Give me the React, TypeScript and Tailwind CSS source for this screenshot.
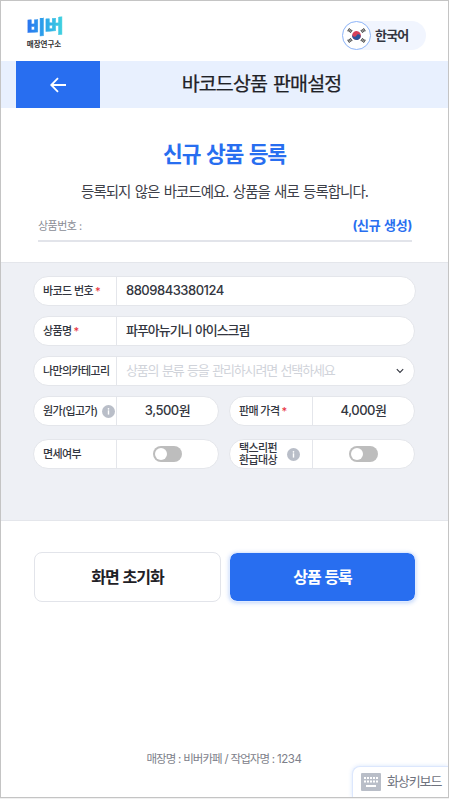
import React from "react";

const Star = () => <span className="ml-[2px] text-[#e8323c]">*</span>;

const Info = ({ className = "" }: { className?: string }) => (
  <svg className={`h-[13px] w-[13px] shrink-0 ${className}`} viewBox="0 0 13 13">
    <circle cx="6.5" cy="6.5" r="6.5" fill="#b9bec8" />
    <circle cx="6.5" cy="3.8" r="0.85" fill="#fff" />
    <rect x="5.8" y="5.3" width="1.4" height="4.3" fill="#fff" />
  </svg>
);

const Toggle = () => (
  <button className="flex h-4 w-[29px] items-center rounded-full bg-[#bdbdbd] px-[2px]" aria-pressed="false">
    <span className="h-3 w-3 rounded-full bg-white" />
  </button>
);

function Field({
  label,
  children,
  className = "",
}: {
  label: React.ReactNode;
  children: React.ReactNode;
  className?: string;
}) {
  return (
    <div className={`flex h-[30px] overflow-hidden rounded-full border border-[#e4e6eb] bg-white ${className}`}>
      <div className="flex w-[83px] shrink-0 items-center border-r border-[#e4e6eb] pl-[9px] text-[11px] leading-[12px] font-medium tracking-[-0.6px] whitespace-nowrap text-[#333640]">
        {label}
      </div>
      <div className="flex min-w-0 flex-1 items-center text-[13px] font-medium tracking-[-0.5px] whitespace-nowrap text-[#333640]">
        {children}
      </div>
    </div>
  );
}

function Flag() {
  return (
    <svg className="h-[29px] w-[29px]" viewBox="0 0 29 29">
      <circle cx="14.5" cy="14.5" r="14" fill="#fff" stroke="#8fb5f8" />
      <g transform="rotate(25 14.5 14.5)">
        <circle cx="14.5" cy="14.5" r="4.4" fill="#d6405a" />
        <path d="M10.1 14.5a2.2 2.2 0 0 0 4.4 0a2.2 2.2 0 0 1 4.4 0a4.4 4.4 0 0 1-8.8 0z" fill="#2a559c" />
      </g>
      <g stroke="#444" strokeWidth="1.1">
        <path d="M5.6 10.2l2-2.8M6.9 11l2-2.8M8.2 11.8l2-2.8" />
        <path d="M23.4 10.2l-2-2.8M22.1 11l-2-2.8M20.8 11.8l-2-2.8" />
        <path d="M5.6 18.8l2 2.8M6.9 18l2 2.8M8.2 17.2l2 2.8" />
        <path d="M23.4 18.8l-2 2.8M22.1 18l-2 2.8M20.8 17.2l-2 2.8" />
      </g>
    </svg>
  );
}

export default function App() {
  return (
    <div className="h-[799px] w-[449px] bg-[#f0f0f0] font-['Inter','Noto_Sans_CJK_KR',sans-serif]">
      <div className="relative flex h-[798px] flex-col overflow-hidden border border-[#c4c4c4] bg-white">
        <header className="flex h-[60px] shrink-0 items-start justify-between pr-[22px] pl-[25px]">
          <div className="flex w-[36px] flex-col items-center pt-[16px]">
            <div className="h-[21px] origin-center -skew-y-4 scale-x-105 scale-y-[0.96] bg-linear-to-r from-[#2b70f0] to-[#41d3df] bg-clip-text text-[20px] leading-[21px] font-black tracking-[-1px] whitespace-nowrap text-transparent [-webkit-text-stroke:0.5px_transparent]">
              비버
            </div>
            <div className="mt-[2px] text-[7.5px] leading-[10px] font-bold whitespace-nowrap text-[#333]">
              매장연구소
            </div>
          </div>
          <button className="mt-5 flex h-[29px] w-[84px] items-center rounded-full bg-[#f1f5fe]">
            <Flag />
            <span className="ml-1 text-[13px] font-bold tracking-[-0.8px] text-[#333640]">한국어</span>
          </button>
        </header>

        <div className="flex h-[47px] shrink-0 bg-[#e8f0fe] pl-[15px]">
          <button className="flex w-[84px] items-center justify-center bg-[#286ef0]" aria-label="뒤로">
            <svg className="h-4 w-4" viewBox="0 0 16 16" fill="none" stroke="#fff" strokeWidth="1.8">
              <path d="M16 8H1.2M8 1.2L1.2 8L8 14.8" />
            </svg>
          </button>
          <h1 className="flex flex-1 items-center justify-center pt-px pr-[25px] text-[19.5px] font-normal tracking-[-0.9px] text-[#1f2126] [word-spacing:1.5px] [-webkit-text-stroke:0.25px_#1f2126]">
            바코드상품 판매설정
          </h1>
        </div>

        <section className="flex h-[154px] shrink-0 flex-col px-[37px] pt-[30px]">
          <h2 className="text-center text-[21.5px] leading-8 font-bold tracking-[-1.2px] text-[#286ef0] [word-spacing:1.8px]">
            신규 상품 등록
          </h2>
          <p className="mt-[12px] text-center text-[14.5px] leading-5 tracking-[-1px] whitespace-nowrap text-[#3d4049] [word-spacing:1.2px]">
            등록되지 않은 바코드예요. 상품을 새로 등록합니다.
          </p>
          <div className="mt-[13px] mr-[-1px] flex h-[27px] items-start justify-between border-b-2 border-[#e2e4ea] leading-5">
            <span className="text-[11px] leading-[22px] tracking-[-0.5px] text-[#8a8d96]">상품번호 :</span>
            <span className="text-[13px] font-bold tracking-[-0.3px] text-[#286ef0] [word-spacing:1px]">(신규 생성)</span>
          </div>
        </section>

        <section className="h-[259px] shrink-0 border-y border-[#e4e6eb] bg-[#eef0f5] px-8 pt-[13px]">
          <div className="flex w-[383px] flex-col gap-[10px]">
            <Field label={<>바코드 번호<Star /></>}>
              <span className="pl-[9px]">8809843380124</span>
            </Field>
            <Field className="mr-[1px]" label={<>상품명<Star /></>}>
              <span className="pl-[9px] tracking-[-1.05px] [word-spacing:1px]">파푸아뉴기니 아이스크림</span>
            </Field>
            <Field className="mr-[1px]" label="나만의카테고리">
              <span className="flex-1 pl-[9px] font-normal tracking-[-1.15px] text-[#d0d3da] [word-spacing:1px]">
                상품의 분류 등을 관리하시려면 선택하세요
              </span>
              <svg className="mr-[10px] h-2 w-2" viewBox="0 0 8 8" fill="none" stroke="#333640" strokeWidth="1.1">
                <path d="M0.8 2.2L4 5.4L7.2 2.2" />
              </svg>
            </Field>
            <div className="mr-[1px] grid grid-cols-2 gap-x-[10px] gap-y-[13px]">
              <Field label={<>원가(입고가)<Info className="ml-[4px]" /></>}>
                <span className="flex-1 text-center">3,500원</span>
              </Field>
              <Field label={<>판매 가격<Star /></>}>
                <span className="flex-1 text-center">4,000원</span>
              </Field>
              <Field label="면세여부">
                <span className="flex flex-1 justify-center"><Toggle /></span>
              </Field>
              <Field label={<><span className="flex flex-col"><span>택스리펀</span><span>환급대상</span></span><Info className="ml-[10px]" /></>}>
                <span className="flex flex-1 justify-center"><Toggle /></span>
              </Field>
            </div>
          </div>
        </section>

        <div className="flex h-[81px] shrink-0 gap-2 pt-[31px] pl-[33px]">
          <button className="h-[50px] w-[187px] rounded-lg border border-[#e2e4ea] bg-white text-[16px] font-bold tracking-[-1px] text-[#1f2126] [word-spacing:1px]">
            화면 초기화
          </button>
          <button className="h-[50px] w-[187px] rounded-lg border border-[#e0ebff] bg-[#286ef0] bg-clip-padding text-[16px] font-bold tracking-[-1px] text-white shadow-[0_1px_4px_rgba(40,110,240,0.3)] [word-spacing:1px]">
            상품 등록
          </button>
        </div>

        <footer className="mt-[147px] pr-px text-center text-[11.5px] leading-5 tracking-[-0.95px] text-[#7d808a] [word-spacing:0.5px]">
          매장명 : 비버카페 / 작업자명 : <span className="tracking-[-0.4px]">1234</span>
        </footer>

        <button className="absolute right-0 bottom-0 flex h-[31px] w-[96px] items-center rounded-tl-lg border-t border-l border-[#dce7fd] bg-white pl-[8px] shadow-[0_0_4px_rgba(40,110,240,0.18)]">
          <svg className="h-[18px] w-5 shrink-0" viewBox="0 0 20 18">
            <rect width="20" height="18" rx="1" fill="#b9bec8" />
            <g fill="#fff">
              <path d="M3 4h2v2H3zM6 4h2v2H6zM9 4h2v2H9zM12 4h2v2h-2zM15 4h2v2h-2zM3 7.5h2v2H3zM6 7.5h2v2H6zM9 7.5h2v2H9zM12 7.5h2v2h-2zM15 7.5h2v2h-2zM5 12h10v2H5z" />
            </g>
          </svg>
          <span className="ml-[6px] text-[13px] tracking-[-1.1px] whitespace-nowrap text-[#6f737e]">화상키보드</span>
        </button>
      </div>
    </div>
  );
}
